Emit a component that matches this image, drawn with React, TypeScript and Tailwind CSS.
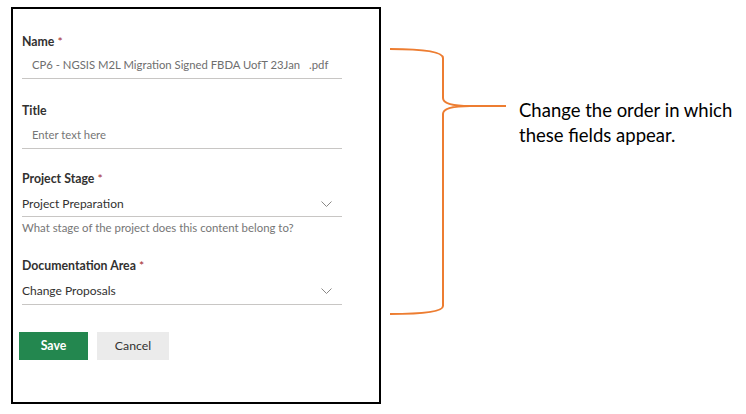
const formFont = { fontFamily: 'Lato, "Noto Sans", "Open Sans", sans-serif' };

type LabelProps = { text: string; required?: boolean; className?: string };

const FieldLabel = ({ text, required, className }: LabelProps) => (
  <div className={`h-[20px] leading-[20px] text-[12.3px] font-bold text-[#323130] ${className ?? ""}`}>
    {text}
    {required && <span className="ml-[3px] text-[#a4262c] font-normal">*</span>}
  </div>
);

const Chevron = () => (
  <svg width="11" height="6" viewBox="0 0 11 6" className="shrink-0">
    <path d="M0.5 0.5 L5.5 5.5 L10.5 0.5" fill="none" stroke="#8a8886" strokeWidth="1" />
  </svg>
);

const DropdownField = ({ value, className }: { value: string; className?: string }) => (
  <div
    className={`flex items-center justify-between h-[20px] box-content border-b border-[#c8c6c4] pr-[10px] text-[12px] text-[#323130] ${className ?? ""}`}
  >
    <span className="leading-[20px]">{value}</span>
    <Chevron />
  </div>
);

export default function App() {
  return (
    <div className="w-[746px] h-[414px] bg-white flex items-start overflow-hidden">
      {/* the form panel */}
      <div
        className="ml-[11px] mt-[7px] w-[370px] h-[397px] shrink-0 border-2 border-black pl-[9px] pt-[23px]"
        style={formFont}
      >
        <div className="w-[320px] flex flex-col">
          <FieldLabel text="Name" required />
          <div className="mt-[3px] pb-[3px] pl-[10px] h-[20px] box-content border-b border-[#c8c6c4] text-[11.3px] leading-[20px] text-[#6e6e6e] whitespace-nowrap">
            CP6 - NGSIS M2L Migration Signed FBDA UofT 23Jan
            <span className="ml-[9px]">.pdf</span>
          </div>

          <FieldLabel text="Title" className="mt-[22px]" />
          <div className="mt-[4px] pb-[3px] pl-[10px] h-[20px] box-content border-b border-[#c8c6c4] text-[11.3px] leading-[20px] text-[#767676]">
            Enter text here
          </div>

          <FieldLabel text="Project Stage" required className="mt-[20px]" />
          <DropdownField value="Project Preparation" className="mt-[5px] pb-[2px]" />
          <div className="mt-[3px] h-[16px] text-[11.4px] leading-[16px] text-[#767676] whitespace-nowrap">
            What stage of the project does this content belong to?
          </div>

          <FieldLabel text="Documentation Area" required className="mt-[20px]" />
          <DropdownField value="Change Proposals" className="mt-[5px] pb-[3px]" />

          <div className="mt-[27px] flex gap-[9px] ml-[-3px]">
            <button className="w-[69px] h-[28px] bg-[#23874f] text-white text-[12.3px] font-bold">
              Save
            </button>
            <button className="w-[72px] h-[28px] bg-[#ebebeb] text-[#323130] text-[12.3px]">
              Cancel
            </button>
          </div>
        </div>
      </div>

      {/* annotation brace */}
      <svg width="135" height="330" viewBox="381 0 135 330" className="shrink-0">
        <path
          d="M390 49 Q443 49 443 58 L443 98 Q443 106 470 106 L506 106 M470 106 Q443 106 443 114 L443 306 Q443 314 390 314"
          fill="none"
          stroke="#ed7d31"
          strokeWidth="2"
        />
      </svg>

      <div
        className="ml-[3px] mt-[98px] text-[18.5px] leading-[25px] text-black"
        style={{ fontFamily: 'Lato, "Liberation Sans", sans-serif' }}
      >
        Change the order in which
        <br />
        these fields appear.
      </div>
    </div>
  );
}
